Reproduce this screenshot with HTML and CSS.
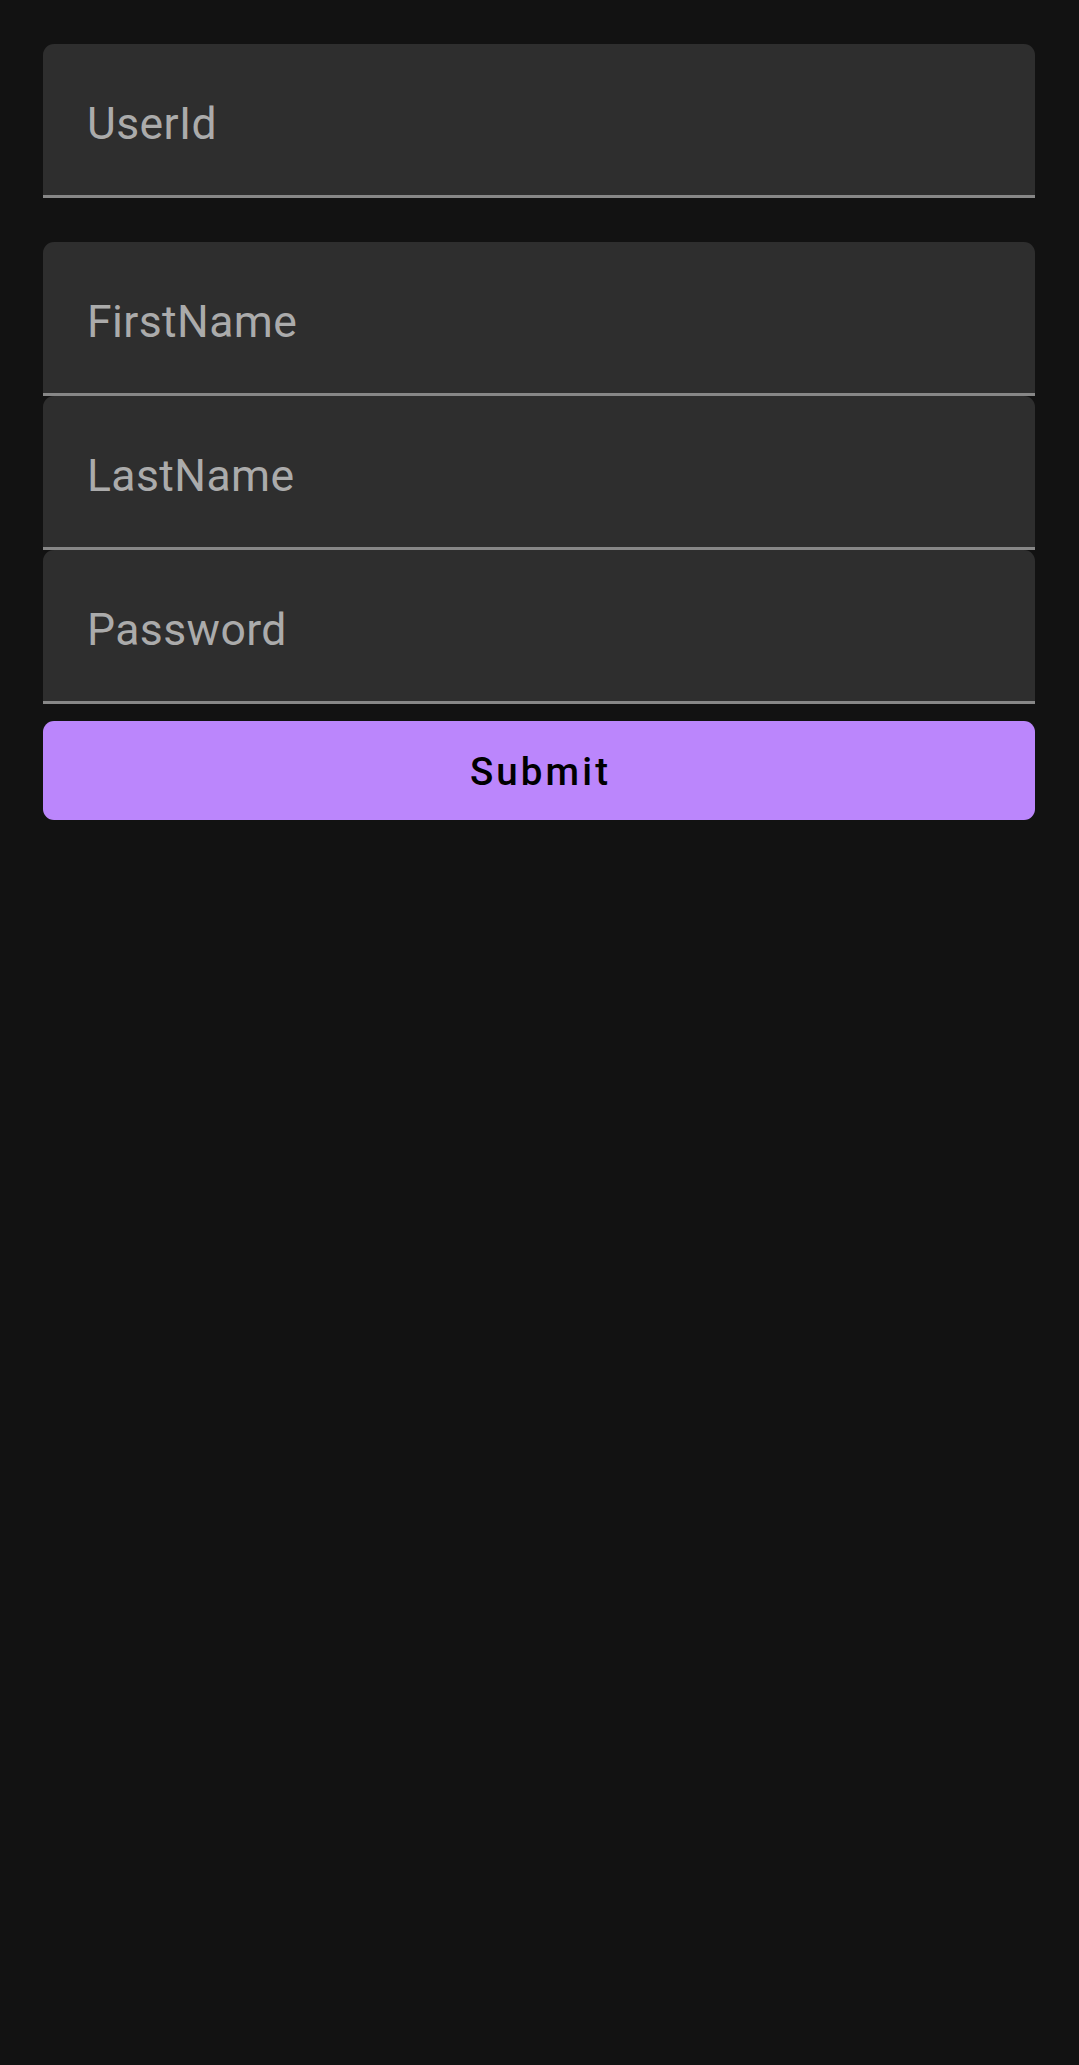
FILE: index.html
```html
<!DOCTYPE html>
<html>
<head>
<meta charset="utf-8">
<link rel="stylesheet" href="styles.css">
</head>
<body>
<main class="form">
  <div class="field field-first"><span class="label">UserId</span></div>
  <div class="group">
    <div class="field"><span class="label">FirstName</span></div>
    <div class="field"><span class="label">LastName</span></div>
    <div class="field"><span class="label">Password</span></div>
  </div>
  <button class="submit">Submit</button>
</main>
</body>
</html>
```

FILE: styles.css
```css
html, body {
  margin: 0;
  padding: 0;
  background: #121212;
  height: 100%;
}
body {
  font-family: Roboto, "Noto Sans", sans-serif;
}
.form {
  padding: 44px 44px 0 43px;
  display: flex;
  flex-direction: column;
}
.group {
  margin-top: 44px;
  display: flex;
  flex-direction: column;
}
.field {
  box-sizing: border-box;
  height: 154px;
  background: #2e2e2e;
  border-radius: 11px 11px 0 0;
  border-bottom: 3px solid #878787;
  padding: 54px 0 0 44px;
}
.label {
  display: block;
  font-size: 44.5px;
  line-height: 52px;
  color: #ababab;
  letter-spacing: 0.4px;
}
.submit {
  margin-top: 17px;
  box-sizing: border-box;
  height: 99px;
  border: none;
  border-radius: 11px;
  background: #bb86fc;
  color: #000;
  font-family: Roboto, "Noto Sans", sans-serif;
  font-weight: 500;
  font-size: 38.5px;
  letter-spacing: 3.1px;
  line-height: 45px;
  padding: 2px 0 0 3px;
  text-align: center;
}
```
